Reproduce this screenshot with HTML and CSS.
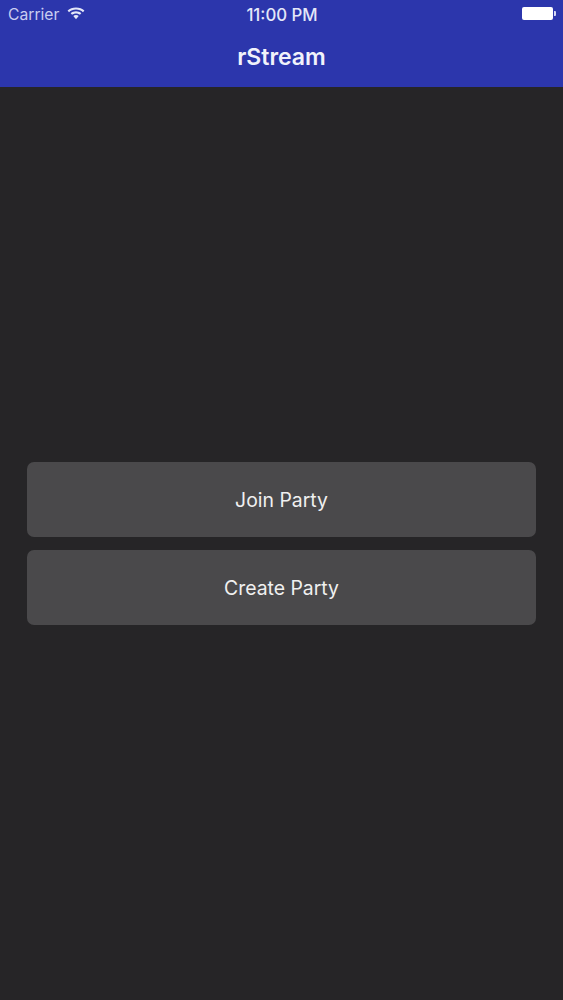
FILE: index.html
```html
<!DOCTYPE html>
<html lang="en">
<head>
    <meta charset="UTF-8">
    <meta name="viewport" content="width=device-width, initial-scale=1.0">
    <title>rStream</title>
    <link rel="stylesheet" href="styles.css">
</head>
<body>
    <!-- Header -->
    <header class="header">
        <div class="status-bar">
            <div class="status-left">
                <span class="carrier">Carrier</span>
                <svg class="wifi" width="18" height="13" viewBox="0 0 18 13">
                    <path d="M9 0.5C5.6 0.5 2.7 1.7 0.6 3.6L2 5.2C3.8 3.6 6.2 2.6 9 2.6C11.8 2.6 14.2 3.6 16 5.2L17.4 3.6C15.3 1.7 12.4 0.5 9 0.5Z" fill="#e4e7f8"/>
                    <path d="M9 4.3C6.9 4.3 5.1 5 3.7 6.2L5.1 7.8C6.1 7 7.5 6.4 9 6.4C10.5 6.4 11.9 7 12.9 7.8L14.3 6.2C12.9 5 11.1 4.3 9 4.3Z" fill="#e4e7f8"/>
                    <path d="M9 8C7.9 8 7 8.4 6.3 9L9 12.2L11.7 9C11 8.4 10.1 8 9 8Z" fill="#e4e7f8"/>
                </svg>
            </div>
            <div class="status-time">11:00 PM</div>
            <div class="status-right">
                <div class="battery"></div>
                <div class="battery-tip"></div>
            </div>
        </div>
        <h1 class="title">rStream</h1>
    </header>

    <!-- Buttons -->
    <main class="content">
        <button class="party-btn">Join Party</button>
        <button class="party-btn">Create Party</button>
    </main>
</body>
</html>
```

FILE: styles.css
```css
* {
    margin: 0;
    padding: 0;
    box-sizing: border-box;
    font-family: 'Inter', 'Liberation Sans', sans-serif;
}

body {
    width: 563px;
    height: 1000px;
    overflow: hidden;
    display: flex;
    flex-direction: column;
    background: #262527;
}

/* Header */
.header {
    height: 87px;
    background: #2c36ac;
    color: white;
}

.status-bar {
    height: 29px;
    padding: 0 7px 0 8px;
    display: grid;
    grid-template-columns: 1fr auto 1fr;
    align-items: center;
}

.status-left {
    display: flex;
    align-items: center;
    gap: 8px;
}

.carrier {
    font-size: 15.7px;
    color: #c9cdf0;
}

.wifi {
    margin-top: -3px;
}

.status-time {
    font-size: 16.8px;
    font-weight: 500;
    color: #e4e7f8;
}

.status-right {
    display: flex;
    align-items: center;
    justify-content: flex-end;
    margin-top: -2px;
}

.battery {
    width: 31px;
    height: 13px;
    background: white;
    border-radius: 2px;
}

.battery-tip {
    width: 2px;
    height: 5px;
    margin-left: 1px;
    background: #d5d8f4;
    border-radius: 0 1px 1px 0;
}

.title {
    margin-top: 2px;
    text-align: center;
    font-size: 23px;
    line-height: 52px;
    font-weight: 600;
    color: #f1f2fb;
}

/* Buttons */
.content {
    flex: 1;
    padding: 0 27px;
    display: flex;
    flex-direction: column;
    justify-content: center;
    gap: 13px;
}

.party-btn {
    height: 75px;
    padding-top: 1px;
    border: none;
    border-radius: 7px;
    background: #4a494b;
    color: #f0f0f0;
    font-size: 19.4px;
}
```
